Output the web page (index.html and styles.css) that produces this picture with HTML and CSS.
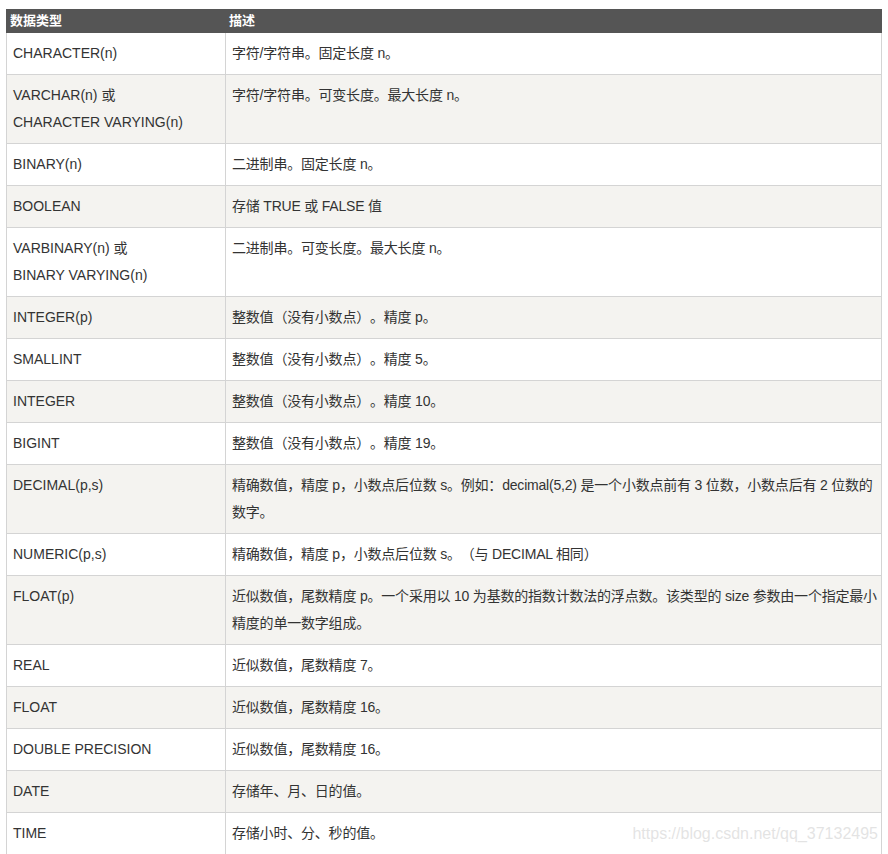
FILE: index.html
```html
<!DOCTYPE html>
<html lang="zh-CN">
<head>
<meta charset="utf-8">
<title>SQL 数据类型</title>
<link rel="stylesheet" href="styles.css">
</head>
<body>
<div class="page">
<table class="types">
<colgroup><col class="c1"><col class="c2"></colgroup>
<thead>
<tr><th>数据类型</th><th>描述</th></tr>
</thead>
<tbody>
<tr><td>CHARACTER(n)</td><td class="desc">字符/字符串。固定长度 n。</td></tr>
<tr class="alt"><td>VARCHAR(n) 或<br>CHARACTER VARYING(n)</td><td class="desc">字符/字符串。可变长度。最大长度 n。</td></tr>
<tr><td>BINARY(n)</td><td class="desc">二进制串。固定长度 n。</td></tr>
<tr class="alt"><td>BOOLEAN</td><td class="desc">存储 TRUE 或 FALSE 值</td></tr>
<tr><td>VARBINARY(n) 或<br>BINARY VARYING(n)</td><td class="desc">二进制串。可变长度。最大长度 n。</td></tr>
<tr class="alt"><td>INTEGER(p)</td><td class="desc">整数值（没有小数点）。精度 p。</td></tr>
<tr><td>SMALLINT</td><td class="desc">整数值（没有小数点）。精度 5。</td></tr>
<tr class="alt"><td>INTEGER</td><td class="desc">整数值（没有小数点）。精度 10。</td></tr>
<tr><td>BIGINT</td><td class="desc">整数值（没有小数点）。精度 19。</td></tr>
<tr class="alt"><td>DECIMAL(p,s)</td><td class="desc">精确数值，精度 p，小数点后位数 s。例如：decimal(5,2) 是一个小数点前有 3 位数，小数点后有 2 位数的数字。</td></tr>
<tr><td>NUMERIC(p,s)</td><td class="desc">精确数值，精度 p，小数点后位数 s。（与 DECIMAL 相同）</td></tr>
<tr class="alt"><td>FLOAT(p)</td><td class="desc">近似数值，尾数精度 p。一个采用以 10 为基数的指数计数法的浮点数。该类型的 size 参数由一个指定最小精度的单一数字组成。</td></tr>
<tr><td>REAL</td><td class="desc">近似数值，尾数精度 7。</td></tr>
<tr class="alt"><td>FLOAT</td><td class="desc">近似数值，尾数精度 16。</td></tr>
<tr><td>DOUBLE PRECISION</td><td class="desc">近似数值，尾数精度 16。</td></tr>
<tr class="alt"><td>DATE</td><td class="desc">存储年、月、日的值。</td></tr>
<tr><td>TIME</td><td class="desc">存储小时、分、秒的值。</td></tr>
</tbody>
</table>
<div class="watermark">https://blog.csdn.net/qq_37132495</div>
</div>
</body>
</html>
```

FILE: styles.css
```css
html, body {
  margin: 0;
  padding: 0;
  background: #ffffff;
}

.page {
  position: relative;
  padding: 9px 6px 0 6px;
  height: 845px;
  overflow: hidden;
}

.types {
  width: 876px;
  border-collapse: collapse;
  table-layout: fixed;
  font-family: "Liberation Sans", Arial, "Noto Sans CJK SC", sans-serif;
  font-size: 14px;
  color: #333333;
  text-spacing-trim: space-all;
}

.types .c1 {
  width: 219px;
}

.types th {
  background: #555555;
  color: #ffffff;
  font-weight: bold;
  font-size: 13px;
  text-align: left;
  padding: 0 3px;
  line-height: 22px;
  border: 1px solid #555555;
}

.types td {
  border: 1px solid #d4d4d4;
  padding: 7px 6px;
  line-height: 27px;
  vertical-align: top;
  background: #ffffff;
}

.types td.desc {
  letter-spacing: -0.2px;
  padding-right: 3px;
}

.types tr.alt td {
  background: #f4f3f0;
}

.watermark {
  position: absolute;
  right: 10px;
  top: 825px;
  font-family: "Liberation Sans", Arial, sans-serif;
  font-size: 16px;
  color: rgba(200, 200, 200, 0.5);
  white-space: nowrap;
}
```
